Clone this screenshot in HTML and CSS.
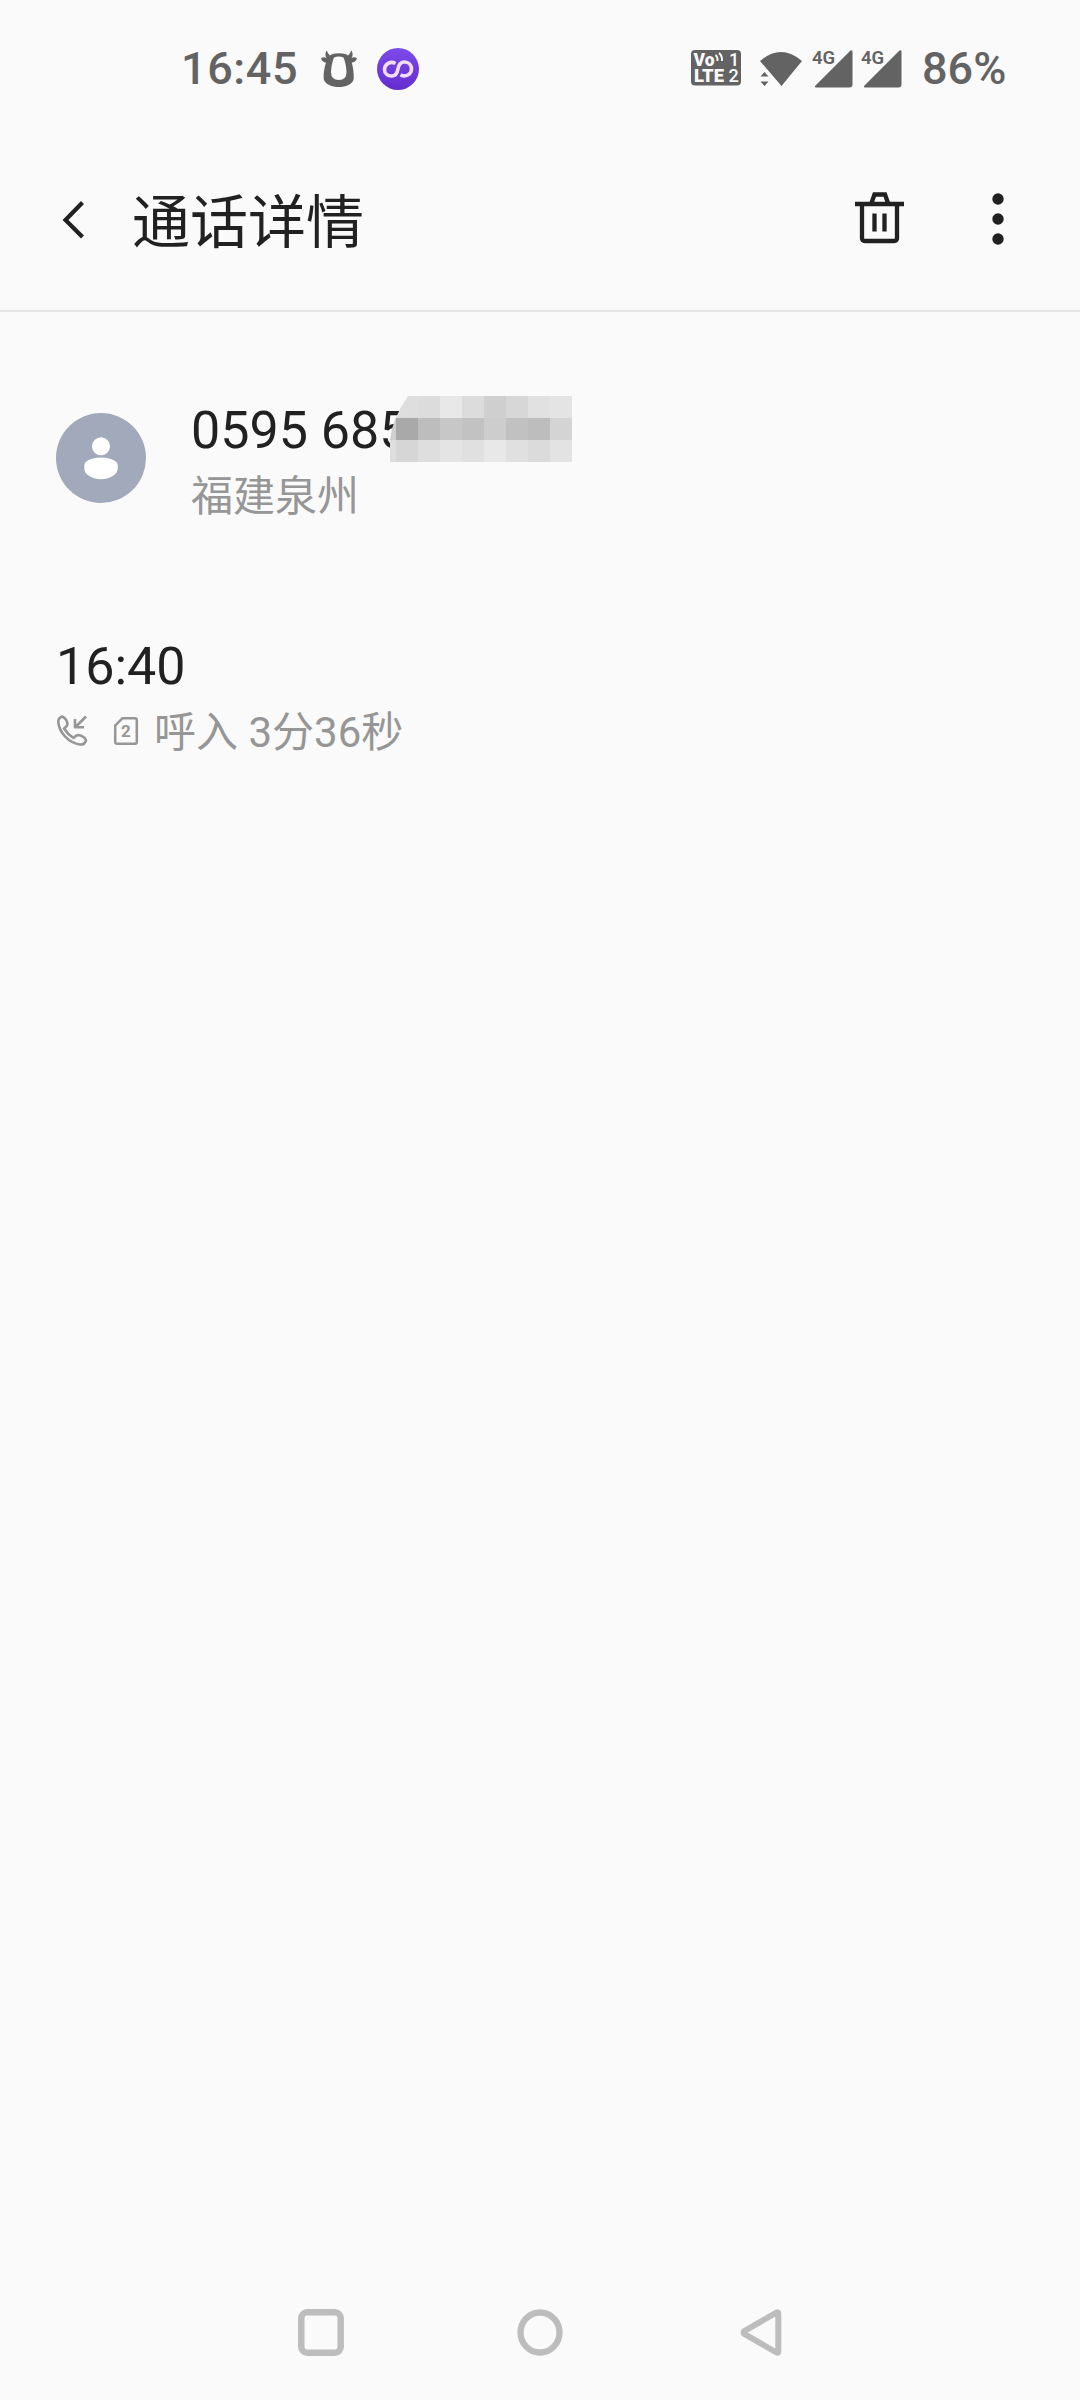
FILE: index.html
```html
<!DOCTYPE html>
<html lang="zh-CN">
<head>
  <meta charset="UTF-8">
  <title>通话详情</title>
  <link rel="stylesheet" href="styles.css">
</head>
<body>
  <div class="status-bar">
    <div class="status-left">
      <span class="clock">16:45</span>
      <svg class="icon-bull" width="36" height="38" viewBox="0 0 36 38">
        <path fill="#636363" d="M5.500 .5C4 3 4 6 5.500 8C3.500 7 1.500 7 0 8.500C1 11 2.500 12.500 5 12.500C3.500 17 2.300 23 2.700 29C4 34.500 11 37 17.800 37S31.500 34.500 32.700 29C33 23 32 17 30.800 12.500C33 12.500 35 11 36 8.500C34.500 7 32.500 7 30.500 8C32 6 32 3 30.500 .5C29 2.500 28.500 4.500 27 5.500C24 2.500 12 2.500 9 5.500C7.500 4.500 7 2.500 5.500 .5Z"/>
        <path fill="#fafafa" d="M13 7.500Q17.800 5.500 22.500 7.500Q25 13 25.500 22Q25.500 30 17.800 30T10 22Q10.500 13 13 7.500Z"/>
      </svg>
      <svg class="icon-app" width="42" height="42" viewBox="0 0 42 42">
        <defs>
          <linearGradient id="purple" x1="0" y1="0" x2="0" y2="1">
            <stop offset="0" stop-color="#7d4be9"/>
            <stop offset="1" stop-color="#632ccf"/>
          </linearGradient>
        </defs>
        <circle cx="21" cy="21" r="21" fill="url(#purple)"/>
        <path fill="none" stroke="#f3dcfb" stroke-width="3.600" d="M18.500 15.500C13.500 12.500 7.500 16 7.500 21.500C7.500 26 11 28 14.500 28C19 28 20.300 25 20.800 21.500C21.500 17 23.500 14 27.500 14C31.500 14 34.500 17 34.500 21C34.500 26.500 28.500 29.500 23.500 26.800"/>
      </svg>
    </div>
    <div class="status-right">
      <svg class="icon-volte" width="50" height="36" viewBox="0 0 50 36">
        <rect width="50" height="35.500" rx="4" fill="#636363"/>
        <g fill="#fafafa">
          <text class="volte-bold" x="2.500" y="15.500" textLength="21" lengthAdjust="spacingAndGlyphs">Vo</text>
          <text class="volte-bold" x="3" y="31.800" textLength="30" lengthAdjust="spacingAndGlyphs">LTE</text>
          <text class="volte-num" x="38" y="15.500">1</text>
          <text class="volte-num" x="37.500" y="31.800">2</text>
        </g>
        <path d="M24.500 5q2.500 2 2 6M28 3q3.500 3 3 8" fill="none" stroke="#fafafa" stroke-width="1.900"/>
      </svg>
      <svg class="icon-wifi" width="42" height="35" viewBox="0 0 42 35">
        <path fill="#636363" d="M0 9Q21-9 42 9L21.500 34ZM4.500 20L8.500 24.500H.5ZM4.500 34L.5 29.500H8.500Z"/>
      </svg>
      <svg class="icon-signal" width="41" height="38" viewBox="0 0 41 38">
        <path fill="#636363" d="M38.500.5Q40.500-.5 40.500 2V34.500Q40.500 37.500 37.500 37.500H4Q2 37 3.500 35.500Z"/>
        <text class="net" x="0" y="14">4G</text>
      </svg>
      <svg class="icon-signal" width="41" height="38" viewBox="0 0 41 38">
        <path fill="#636363" d="M38.500.5Q40.500-.5 40.500 2V34.500Q40.500 37.500 37.500 37.500H4Q2 37 3.500 35.500Z"/>
        <text class="net" x="0" y="14">4G</text>
      </svg>
      <span class="battery">86%</span>
    </div>
  </div>

  <header class="app-bar">
    <svg class="icon-back" width="24" height="40" viewBox="0 0 24 40">
      <path d="M22.500 2.500L5.500 20L22.500 37" fill="none" stroke="#212121" stroke-width="4.200"/>
    </svg>
    <h1 class="title">通话详情</h1>
    <svg class="icon-trash" width="49" height="52" viewBox="0 0 49 52">
      <g fill="none" stroke="#212121" stroke-width="4.300">
        <path d="M0 12H49M16.500 11L19.500 2.500H30L33 11"/>
        <path d="M7 11V46Q7 49 10 49H39Q42 49 42 46V11M19.500 21.500V39.500M29.500 21.500V39.500"/>
      </g>
    </svg>
    <svg class="icon-more" width="12" height="52" viewBox="0 0 12 52">
      <g fill="#212121">
        <circle cx="6" cy="6" r="5.700"/>
        <circle cx="6" cy="26" r="5.700"/>
        <circle cx="6" cy="46" r="5.700"/>
      </g>
    </svg>
  </header>

  <main class="content">
    <section class="contact">
      <svg class="avatar" width="90" height="90" viewBox="0 0 90 90">
        <circle cx="45" cy="45" r="45" fill="#a2a9bb"/>
        <circle cx="45" cy="33.300" r="9" fill="#fff"/>
        <path fill="#fff" d="M28.300 52Q28.300 49.500 31 48Q36 44.500 45 44.500T59 48Q61.700 49.500 61.700 52V55.500C61.700 62 53 66.300 45 66.300S28.300 62 28.300 55.500Z"/>
      </svg>
      <div class="contact-info">
        <div class="number">
          <span>0595 685</span>
          <svg class="mask" width="182" height="66" viewBox="0 0 182 66">
            <clipPath id="mask-edge">
              <path d="M18 0H182V66H0V44Q2 23 18 0Z"/>
            </clipPath>
            <g clip-path="url(#mask-edge)" shape-rendering="crispEdges">
              <path fill="#dedede" d="M0 0h28v22H0z"/>
              <path fill="#dcdcdc" d="M28 0h22v22H28z"/>
              <path fill="#e8e8e8" d="M50 0h22v22H50z"/>
              <path fill="#dcdcdc" d="M72 0h22v22H72z"/>
              <path fill="#cfcfcf" d="M94 0h22v22H94z"/>
              <path fill="#d7d7d7" d="M116 0h22v22h-22z"/>
              <path fill="#e1e1e1" d="M138 0h22v22h-22z"/>
              <path fill="#e4e4e4" d="M160 0h22v22h-22z"/>
              <path fill="#cfcfcf" d="M0 22h6v22H0z"/>
              <path fill="#a9a9a9" d="M6 22h22v22H6z"/>
              <path fill="#bdbdbd" d="M28 22h22v22H28z"/>
              <path fill="#c7c7c7" d="M50 22h22v22H50z"/>
              <path fill="#c2c2c2" d="M72 22h22v22H72z"/>
              <path fill="#cdcdcd" d="M94 22h22v22H94z"/>
              <path fill="#c1c1c1" d="M116 22h22v22h-22z"/>
              <path fill="#bdbdbd" d="M138 22h22v22h-22z"/>
              <path fill="#d4d4d4" d="M160 22h22v22h-22z"/>
              <path fill="#dedede" d="M0 44h6v22H0z"/>
              <path fill="#d6d6d6" d="M6 44h22v22H6z"/>
              <path fill="#dedede" d="M28 44h22v22H28z"/>
              <path fill="#e4e4e4" d="M50 44h22v22H50z"/>
              <path fill="#e0e0e0" d="M72 44h22v22H72z"/>
              <path fill="#e8e8e8" d="M94 44h22v22H94z"/>
              <path fill="#e0e0e0" d="M116 44h22v22h-22z"/>
              <path fill="#dbdbdb" d="M138 44h22v22h-22z"/>
              <path fill="#e3e3e3" d="M160 44h22v22h-22z"/>
            </g>
          </svg>
        </div>
        <div class="sub">福建泉州</div>
      </div>
    </section>

    <section class="call">
      <div class="call-time">16:40</div>
      <div class="call-detail">
        <svg class="icon-incoming" width="30" height="31" viewBox="0 0 30 31">
          <g fill="none" stroke="#969696" stroke-width="2.600" stroke-linejoin="round">
            <path d="M5 1.500Q1 3 1.300 7.500C2.500 18 12 28 23 29.500Q27.500 30 29 25.500Q28 21.500 21.500 20Q19 20 16.500 23C12.500 20.500 9.500 17.500 7 13.500Q10.500 11 10.500 9Q9.500 3 5 1.500Z"/>
            <path d="M29 1.500L18.500 12M18 4V12.300H27"/>
          </g>
        </svg>
        <svg class="icon-sim" width="24" height="28" viewBox="0 0 24 28">
          <path d="M8.500 1.200H21Q22.800 1.200 22.800 3V25Q22.800 26.800 21 26.800H3Q1.200 26.800 1.200 25V8.500Z" fill="none" stroke="#969696" stroke-width="2.500"/>
          <text class="sim-num" x="12" y="19.800">2</text>
        </svg>
        <span class="sub">呼入 3分36秒</span>
      </div>
    </section>
  </main>

  <nav class="nav-bar">
    <svg width="46" height="47" viewBox="0 0 46 47">
      <rect x="3.300" y="3.300" width="39.400" height="40.400" rx="6" fill="none" stroke="#bdbdbd" stroke-width="6.500"/>
    </svg>
    <svg width="46" height="47" viewBox="0 0 46 47">
      <ellipse cx="21" cy="23.500" rx="19.500" ry="20" fill="none" stroke="#bdbdbd" stroke-width="6.300"/>
    </svg>
    <svg width="42" height="47" viewBox="0 0 42 47">
      <path d="M36.500 3.500Q38.300 2.500 38.300 4.500V42.500Q38.300 44.500 36.500 43.500L4.500 25Q2.500 23.500 4.500 22Z" fill="none" stroke="#bdbdbd" stroke-width="6"/>
    </svg>
  </nav>
</body>
</html>
```
FILE: styles.css
```css
* { box-sizing: border-box; margin: 0; padding: 0; }
body {
  width: 1080px;
  height: 2400px;
  display: flex;
  flex-direction: column;
  background: #fafafa;
  color: #212121;
  font-family: Roboto, "Noto Sans CJK SC", sans-serif;
}
svg {
  display: block;
  flex-shrink: 0;
  overflow: visible;
}

/* Status bar */
.status-bar {
  display: flex;
  justify-content: space-between;
  align-items: center;
  height: 136px;
  padding: 0 75px 0 181px;
  color: #636363;
  font-size: 45px;
  font-weight: 490;
}
.status-left, .status-right {
  display: flex;
  align-items: center;
}
.clock {
  width: 116px;
  letter-spacing: 0.6px;
}
.icon-bull { margin: 2px 20px 0 24px; }
.icon-app { margin-top: 2px; }
.icon-volte { margin-right: 19px; }
.icon-wifi { margin: 2px 10px 0 0; }
.icon-signal { margin: 1px 8px 0 0; }
.battery {
  width: 83px;
  margin-left: 12px;
}
.volte-bold {
  font-size: 18px;
  font-weight: 900;
}
.volte-num {
  font-size: 18px;
  font-weight: 500;
}
.net {
  font-size: 18.5px;
  font-weight: 600;
  fill: #636363;
}

/* App bar */
.app-bar {
  display: flex;
  align-items: center;
  height: 176px;
  padding: 0 76px 11px 60px;
  border-bottom: 2px solid #e5e5e5;
}
.icon-back { margin-top: 4px; }
.title {
  flex: 1;
  margin: 11px 0 0 48px;
  font-size: 58px;
  font-weight: 400;
  line-height: 80px;
}
.icon-trash { margin-right: 88px; }
.icon-more { margin-top: 3px; }

/* Call details */
.content {
  flex: 1;
  padding: 84px 56px 0;
}
.contact {
  display: flex;
  align-items: center;
  height: 124px;
}
.contact-info { margin-left: 45px; }
.number {
  position: relative;
  width: 400px;
  padding-top: 2px;
  font-size: 52px;
  line-height: 66px;
}
.mask {
  position: absolute;
  left: 199px;
  top: 0;
}
.sub {
  font-size: 42px;
  font-weight: 380;
  line-height: 56px;
  padding-top: 5px;
  color: #969696;
}
.contact .sub { margin-bottom: -5px; }
.call { margin-top: 114px; }
.call-time {
  font-size: 52px;
  line-height: 66px;
}
.call-detail {
  display: flex;
  align-items: center;
}
.icon-incoming { margin: 0 28px 0 1px; }
.icon-sim { margin: 0 16px 0 -1px; }
.sim-num {
  font-size: 17px;
  font-weight: 700;
  text-anchor: middle;
  fill: #969696;
}

/* System navigation */
.nav-bar {
  display: flex;
  justify-content: space-between;
  align-items: center;
  height: 130px;
  padding: 0 298px 5px;
}
```
